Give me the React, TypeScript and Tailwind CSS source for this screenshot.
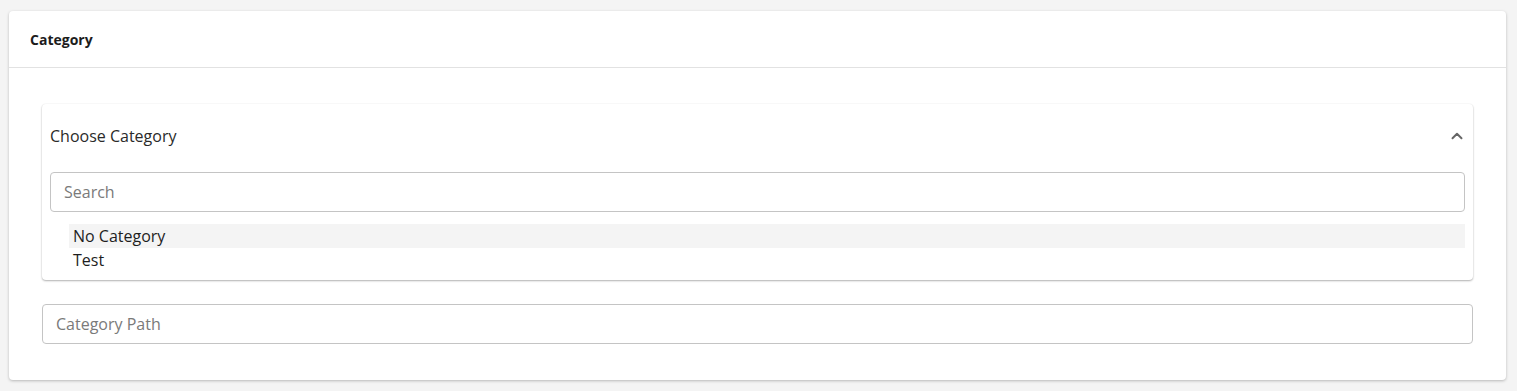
export default function App() {
  return (
    <div className="min-h-[391px] bg-[#f4f4f4] pl-[9px] pr-[11px] pt-[11px] pb-[11px] font-['Open_Sans',sans-serif] text-[#212529]">
      <div className="rounded-[4px] bg-white shadow-[0_1px_3px_rgba(0,0,0,0.25)]">
        <div className="flex h-[57px] items-center border-b border-[#e2e2e2] px-[21px]">
          <h2 className="text-[14px] font-bold text-[#1c1c1c]">Category</h2>
        </div>

        <div className="px-[33px] pt-[36px] pb-[36px]">
          {/* dropdown */}
          <div className="rounded-[4px] bg-white px-2 pb-2 shadow-[0_1px_2px_rgba(0,0,0,0.3),0_0_2px_rgba(0,0,0,0.06)]">
            <div className="flex h-[64px] items-center justify-between">
              <span className="text-[16px] text-[#2a2a2a]">Choose Category</span>
              <svg width="18" height="18" viewBox="0 0 24 24" fill="none" stroke="#666" strokeWidth="2.6" strokeLinecap="round" strokeLinejoin="round" className="-mr-[1px]">
                <path d="M6 15l6-6 6 6" />
              </svg>
            </div>
            <input
              placeholder="Search"
              className="mt-1 block h-[40px] w-full rounded-[4px] border border-[#c4c4c4] px-[13px] text-[16px] outline-none placeholder:text-[#7a7a7a]"
            />
            <ul className="mt-3 pl-[19px] text-[16px] leading-[24px] text-[#1e1e1e]">
              <li className="bg-[#f4f4f4] px-1">No Category</li>
              <li className="px-1">Test</li>
            </ul>
          </div>

          <input
            placeholder="Category Path"
            className="mt-6 block h-[40px] w-full rounded-[4px] border border-[#c4c4c4] px-[13px] text-[16px] outline-none placeholder:text-[#7a7a7a]"
          />
        </div>
      </div>
    </div>
  )
}
